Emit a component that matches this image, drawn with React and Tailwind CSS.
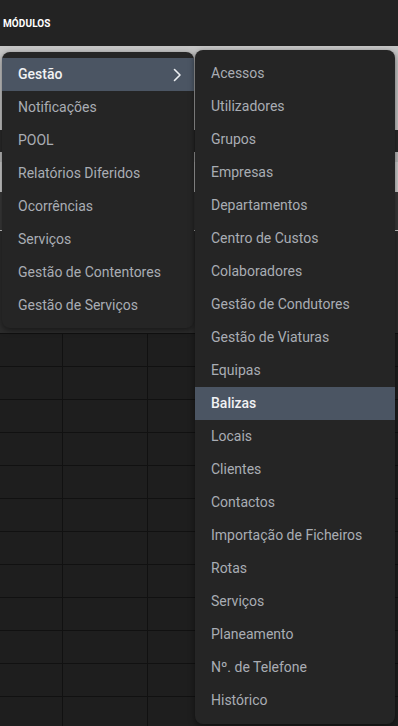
import React from "react";

const main = [
  "Gestão",
  "Notificações",
  "POOL",
  "Relatórios Diferidos",
  "Ocorrências",
  "Serviços",
  "Gestão de Contentores",
  "Gestão de Serviços",
];

const sub = [
  "Acessos",
  "Utilizadores",
  "Grupos",
  "Empresas",
  "Departamentos",
  "Centro de Custos",
  "Colaboradores",
  "Gestão de Condutores",
  "Gestão de Viaturas",
  "Equipas",
  "Balizas",
  "Locais",
  "Clientes",
  "Contactos",
  "Importação de Ficheiros",
  "Rotas",
  "Serviços",
  "Planeamento",
  "Nº. de Telefone",
  "Histórico",
];

const rows = Array.from({ length: 12 });

export default function App() {
  return (
    <div
      className="w-[398px] h-[726px] overflow-hidden bg-[#1e1e1e] relative"
      style={{ fontFamily: "Roboto, 'Noto Sans', sans-serif" }}
    >
      <div className="h-[46px] bg-[#232323] flex items-center pl-[3px]">
        <span className="text-[10px] font-bold text-white tracking-[0.1px]">MÓDULOS</span>
      </div>

      {/* underlying page */}
      <div className="flex flex-col">
        <div className="h-[84px] bg-[#c6c6c6]" />
        <div className="h-[22px] bg-[#2a2a2a]" />
        <div className="h-[10px] bg-[#bdbdbd]" />
        <div className="h-[30px] bg-[#d0d0d0]" />
        <div className="h-[38px] bg-[#3a3a3a]" />
        <div className="h-[103px] bg-[#2c2c2c] border-t border-[#cfcfcf]" />
        <div className="flex flex-col">
          {rows.map((_, i) => (
            <div key={i} className="h-[33px] flex border-t border-[#111]">
              <div className="w-[63px] border-r border-[#111]" />
              <div className="w-[85px] border-r border-[#111]" />
              <div className="flex-1" />
            </div>
          ))}
        </div>
      </div>

      {/* main menu */}
      <div className="absolute left-[2px] top-[52px] w-[192px] rounded-lg bg-[#252525] py-[6px] shadow-[0_2px_6px_rgba(0,0,0,0.5)]">
        {main.map((m, i) => (
          <div
            key={m}
            className={
              i === 0
                ? "h-[33px] flex items-center justify-between pl-[16px] pr-[12px] bg-[#4b5563] text-[#f1f2f4] text-[14px] font-medium"
                : "h-[33px] flex items-center pl-[16px] text-[#a9adb4] text-[14px]"
            }
          >
            <span>{m}</span>
            {i === 0 && (
              <svg width="10" height="14" viewBox="0 0 10 14" fill="none">
                <path d="M2.5 1.5 L8 7 L2.5 12.5" stroke="#eceef1" strokeWidth="1.6" strokeLinecap="round" strokeLinejoin="round" />
              </svg>
            )}
          </div>
        ))}
      </div>

      {/* submenu */}
      <div className="absolute left-[195px] top-[50px] w-[200px] rounded-lg bg-[#252525] py-[7px] shadow-[0_2px_6px_rgba(0,0,0,0.5)]">
        {sub.map((s, i) => (
          <div
            key={i}
            className={
              s === "Balizas"
                ? "h-[33px] flex items-center pl-[16px] bg-[#4b5563] text-[#f1f2f4] text-[14px] font-medium"
                : "h-[33px] flex items-center pl-[16px] text-[#a9adb4] text-[14px]"
            }
          >
            {s}
          </div>
        ))}
      </div>
    </div>
  );
}
